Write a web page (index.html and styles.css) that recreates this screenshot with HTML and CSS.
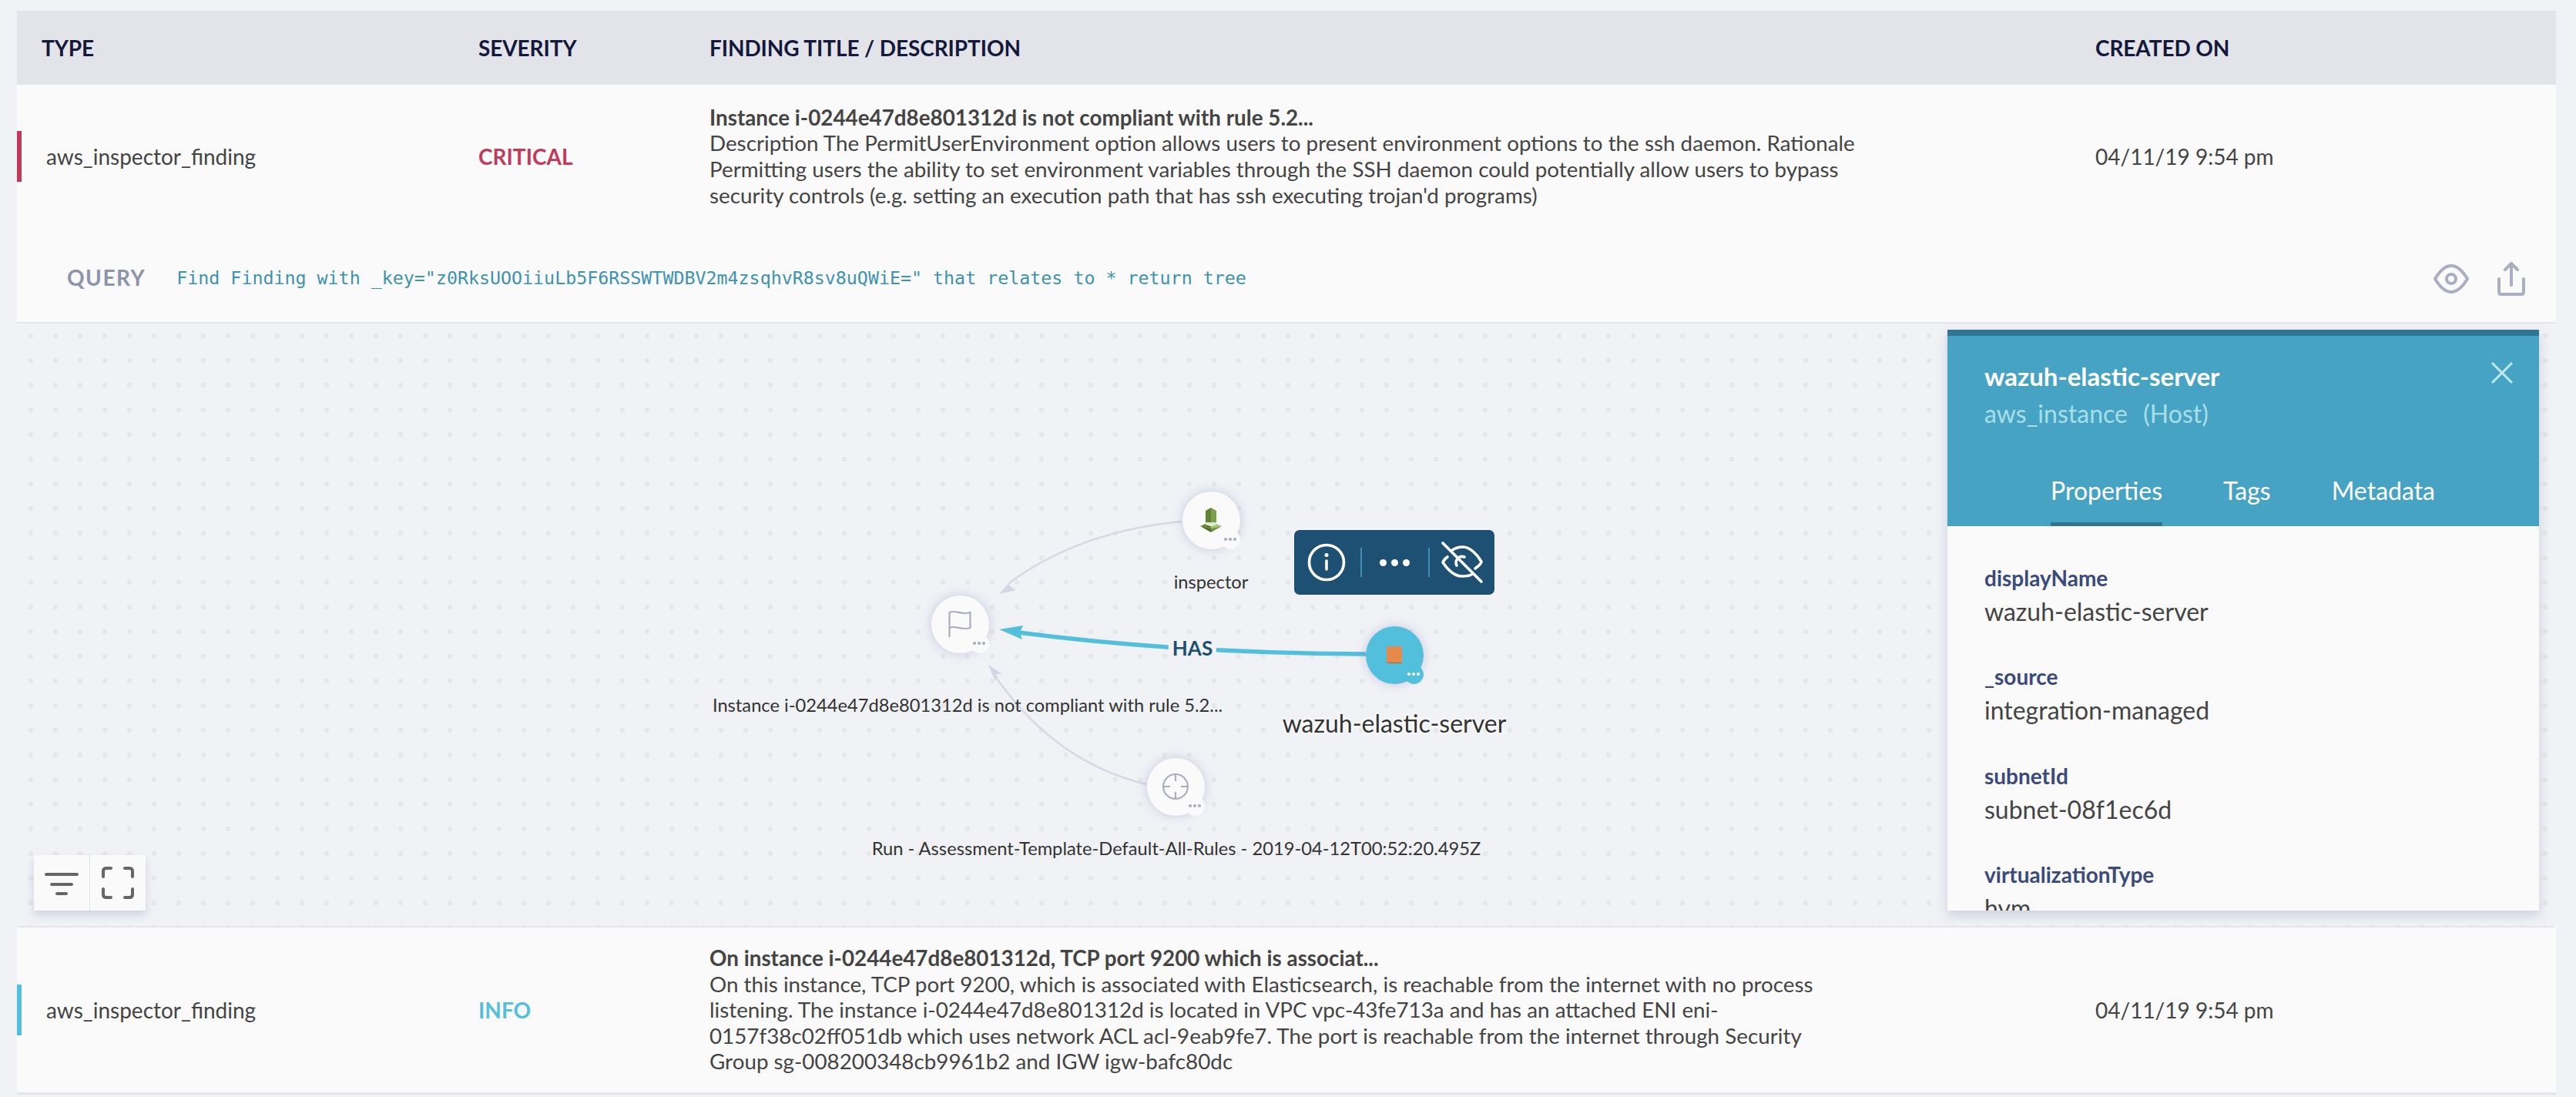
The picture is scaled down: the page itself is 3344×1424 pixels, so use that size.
FILE: index.html
```html
<!DOCTYPE html>
<html lang="en">
<head>
    <meta charset="UTF-8">
    <title>Findings</title>
    <link rel="stylesheet" href="styles.css">
</head>
<body>
    <div class="findings">
        <div class="grid-row head">
            <div class="cell cell-type">TYPE</div>
            <div class="cell">SEVERITY</div>
            <div class="cell">FINDING TITLE / DESCRIPTION</div>
            <div class="cell">CREATED ON</div>
        </div>

        <div class="grid-row finding finding-first">
            <div class="cell type-value"><span class="bar bar-critical"></span>aws_inspector_finding</div>
            <div class="cell critical">CRITICAL</div>
            <div class="cell desc">
                <strong>Instance i-0244e47d8e801312d is not compliant with rule 5.2...</strong>
                Description The PermitUserEnvironment option allows users to present environment options to the ssh daemon. Rationale Permitting users the ability to set environment variables through the SSH daemon could potentially allow users to bypass security controls (e.g. setting an execution path that has ssh executing trojan'd programs)
            </div>
            <div class="cell">04/11/19 9:54 pm</div>
        </div>

        <div class="query">
            <span class="query-label">QUERY</span>
            <code class="query-code">Find Finding with _key="z0RksUOOiiuLb5F6RSSWTWDBV2m4zsqhvR8sv8uQWiE=" that relates to * return tree</code>
            <div class="query-actions">
                <svg class="icon-eye" width="48" height="38" viewBox="0 0 48 38"><path d="M3 19C6 14 14 2 24 2s18 12 21 17c-3 5-11 17-21 17S6 24 3 19z"/><circle cx="24" cy="19" r="6"/></svg>
                <svg class="icon-share" width="36" height="44" viewBox="0 0 36 44"><path d="M2 22v17q0 3 3 3h26q3 0 3-3V22M18 30V3M10 10l8-8 8 8"/></svg>
            </div>
        </div>

        <!-- Graph canvas -->
        <div class="graph">
            <svg class="edges" width="3291" height="782" viewBox="24 420 3291 782">
                <path class="edge" d="M1534 677Q1400 690 1310 757"/>
                <polygon class="edge-head" points="1297,771 1312,754 1310,760 1319,766"/>
                <path class="edge" d="M1488 1018Q1370 990 1292 878"/>
                <polygon class="edge-head" points="1283,863 1301,875 1294,875 1292,884"/>
                <path class="edge-active" d="M1773 849Q1530 848 1322 821"/>
                <polygon class="edge-active-head" points="1297,817 1328,812 1324,821 1327,830"/>
            </svg>

            <div class="node node-inspector">
                <svg width="30" height="34" viewBox="0 0 30 34">
                    <polygon fill="#5f8233" points="8,5 15,1 15,20 8,20"/>
                    <polygon fill="#7b9f4b" points="15,1 22,5 22,20 15,20"/>
                    <polygon fill="#dfe8cf" points="8,20 22,20 22,23 8,23"/>
                    <polygon fill="#5f8233" points="8,23 15,25 15,28 1,25 8,22"/>
                    <polygon fill="#a5c46f" points="22,23 15,25 15,28 29,25 22,22"/>
                    <polygon fill="#4f6d2a" points="1,25 15,28 15,33"/>
                    <polygon fill="#6f9340" points="29,25 15,28 15,33"/>
                </svg>
                <span class="more"><i></i><i></i><i></i></span>
            </div>
            <div class="node node-flag">
                <svg class="line-icon" width="32" height="38" viewBox="0 0 32 38"><path d="M2.5 36V4C10 0 18 8 29.500 4V24C18 28 10 20 2.500 24"/></svg>
                <span class="more"><i></i><i></i><i></i></span>
            </div>
            <div class="node node-target">
                <svg class="line-icon" width="36" height="36" viewBox="0 0 36 36"><circle cx="18" cy="18" r="16"/><path d="M18 2V11M18 25V34M2 18H11M25 18H34"/></svg>
                <span class="more"><i></i><i></i><i></i></span>
            </div>
            <div class="node node-server">
                <span class="server-chip"></span>
                <span class="more"><i></i><i></i><i></i></span>
            </div>

            <div class="graph-label label-inspector">inspector</div>
            <div class="graph-label label-flag">Instance i-0244e47d8e801312d is not compliant with rule 5.2...</div>
            <div class="graph-label label-run">Run - Assessment-Template-Default-All-Rules - 2019-04-12T00:52:20.495Z</div>
            <div class="graph-label label-server">wazuh-elastic-server</div>
            <div class="edge-label">HAS</div>

            <div class="node-menu">
                <svg class="menu-icon menu-info" width="54" height="54" viewBox="0 0 54 54"><circle cx="27" cy="27" r="22.500"/><circle class="solid" cx="27" cy="17.500" r="2.500"/><path d="M27 25V36"/></svg>
                <span class="menu-sep"></span>
                <span class="menu-dots"><i></i><i></i><i></i></span>
                <span class="menu-sep"></span>
                <svg class="menu-icon menu-eye" width="60" height="60" viewBox="0 0 60 60"><path d="M16 15C20 12 25 10 31 10C40 10 49 19 55 29C55 31 51 35 47 38M42 46C38 48 34 48 30 48C20 48 11 39 5 30C6 27 8 25 11 23"/><path d="M23 34A8 8 0 0 1 33 23"/><path d="M5 5L55 55"/></svg>
            </div>

            <aside class="panel">
                <div class="panel-head">
                    <svg class="panel-close" width="30" height="30" viewBox="0 0 30 30"><path d="M2 2L28 28M28 2L2 28"/></svg>
                    <div class="panel-title">wazuh-elastic-server</div>
                    <div class="panel-sub">aws_instance&nbsp; (Host)</div>
                    <div class="tabs">
                        <span class="tab tab-active">Properties</span>
                        <span class="tab">Tags</span>
                        <span class="tab">Metadata</span>
                    </div>
                </div>
                <div class="props">
                    <div class="prop"><div class="prop-key">displayName</div><div class="prop-val">wazuh-elastic-server</div></div>
                    <div class="prop"><div class="prop-key">_source</div><div class="prop-val">integration-managed</div></div>
                    <div class="prop"><div class="prop-key">subnetId</div><div class="prop-val">subnet-08f1ec6d</div></div>
                    <div class="prop"><div class="prop-key">virtualizationType</div><div class="prop-val">hvm</div></div>
                </div>
            </aside>

            <div class="graph-controls">
                <div class="control">
                    <svg width="44" height="32" viewBox="0 0 44 32"><path d="M2 5H42M9 18H35M16 30H28"/></svg>
                </div>
                <div class="control">
                    <svg width="42" height="42" viewBox="0 0 42 42"><path d="M2 13V6Q2 2 6 2H12M30 2H36Q40 2 40 6V13M2 29V36Q2 40 6 40H12M30 40H36Q40 40 40 36V29"/></svg>
                </div>
            </div>
        </div>

        <div class="grid-row finding finding-second">
            <div class="cell type-value"><span class="bar bar-info"></span>aws_inspector_finding</div>
            <div class="cell info">INFO</div>
            <div class="cell desc">
                <strong>On instance i-0244e47d8e801312d, TCP port 9200 which is associat...</strong>
                On this instance, TCP port 9200, which is associated with Elasticsearch, is reachable from the internet with no process listening. The instance i-0244e47d8e801312d is located in VPC vpc-43fe713a and has an attached ENI eni-0157f38c02ff051db which uses network ACL acl-9eab9fe7. The port is reachable from the internet through Security Group sg-008200348cb9961b2 and IGW igw-bafc80dc
            </div>
            <div class="cell">04/11/19 9:54 pm</div>
        </div>
    </div>
</body>
</html>
```

FILE: styles.css
```css
body {
    margin: 0;
    background: #f0f2f6;
    font-family: Lato, "Open Sans", sans-serif;
    color: #444;
    font-size: 28px;
    overflow: hidden;
}

.findings {
    margin: 14px 26px 0 22px;
    height: 1410px;
}

.grid-row {
    display: grid;
    grid-template-columns: 599px 300px 1799px 1fr;
    align-items: center;
    background: #fafafa;
}

.head {
    height: 96px;
    background: #e2e4ea;
    color: #14183a;
    font-size: 28px;
    font-weight: 700;
    letter-spacing: -0.1px;
}

.head .cell-type {
    padding-left: 32px;
}

.finding-first {
    height: 186px;
}

.finding-second {
    height: 214px;
    border-bottom: 3px solid #e4e6ec;
}

.type-value {
    display: flex;
    align-items: center;
}

.bar {
    width: 6px;
    height: 66px;
    margin-right: 32px;
}

.bar-critical {
    background: #c23a5a;
}

.bar-info {
    background: #52bfdd;
}

.critical {
    color: #c23a5a;
    font-weight: 700;
}

.info {
    color: #52bfdd;
    font-weight: 700;
}

.desc {
    width: 1494px;
    font-size: 27.8px;
    line-height: 33.6px;
}

.desc strong {
    display: block;
}

/* Query bar */
.query {
    display: flex;
    align-items: center;
    height: 124px;
    padding: 6px 40px 0 65px;
    box-sizing: border-box;
    background: #fafafa;
    border-bottom: 2px solid #e4e6ec;
}

.query-label {
    color: #8c93ab;
    font-weight: 700;
    font-size: 28px;
    letter-spacing: 1.5px;
    margin-right: 40px;
}

.query-code {
    color: #3e93ad;
    font-family: "DejaVu Sans Mono", monospace;
    font-size: 23.3px;
}

.query-actions {
    display: flex;
    align-items: center;
    gap: 36px;
    margin: 3px 0 0 auto;
}

.icon-eye, .icon-share {
    fill: none;
    stroke: #a9aec2;
    stroke-width: 4;
    stroke-linecap: round;
    stroke-linejoin: round;
}

/* Graph */
.graph {
    position: relative;
    box-sizing: border-box;
    height: 784px;
    margin: 0 3px 0 2px;
    overflow: hidden;
    border-bottom: 2px solid #e4e6ec;
    background-color: #f0f2f6;
    background-image: radial-gradient(circle at center, #e6e8e9 3.2px, transparent 3.8px);
    background-size: 32px 32px;
}

.edges {
    position: absolute;
    left: 0;
    top: 0;
}

.edge {
    fill: none;
    stroke: #d6d9e6;
    stroke-width: 2.5;
}

.edge-head {
    fill: #d3d6e4;
}

.edge-active {
    fill: none;
    stroke: #52bfdd;
    stroke-width: 5.5;
}

.edge-active-head {
    fill: #52bfdd;
}

.node {
    position: absolute;
    display: flex;
    align-items: center;
    justify-content: center;
    width: 75px;
    height: 75px;
    border-radius: 50%;
    background: #fafafa;
    box-shadow: 0 0 14px rgba(90, 100, 160, 0.28);
}

.node-inspector {
    left: 1510.5px;
    top: 217.5px;
}

.node-flag {
    left: 1184.5px;
    top: 352.5px;
}

.node-target {
    left: 1464.5px;
    top: 563.5px;
}

.node-server {
    left: 1748.5px;
    top: 392.5px;
    background: #52bfdd;
}

.line-icon {
    fill: none;
    stroke: #a9aec2;
    stroke-width: 2.2;
}

.more {
    position: absolute;
    right: 0;
    bottom: 0;
    display: flex;
    align-items: center;
    justify-content: center;
    gap: 2.5px;
    width: 25px;
    height: 25px;
    border-radius: 50%;
    background: #fafafa;
}

.more i {
    width: 3.5px;
    height: 3.5px;
    border-radius: 50%;
    background: #a9aec2;
}

.node-server .more {
    background: #52bfdd;
}

.node-server .more i {
    background: #fff;
}

.server-chip {
    width: 20px;
    height: 21px;
    border-radius: 2px;
    background: #e58a4a;
    border-bottom: 1px solid #9c6a3c;
}

.graph-label {
    position: absolute;
    transform: translateX(-50%);
    white-space: nowrap;
    color: #333;
    font-size: 23.7px;
    line-height: 30px;
}

.label-inspector {
    left: 1548px;
    top: 320px;
}

.label-flag {
    left: 1232px;
    top: 480px;
}

.label-run {
    left: 1503px;
    top: 666px;
}

.label-server {
    left: 1786px;
    top: 499px;
    font-size: 32px;
    line-height: 40px;
    text-shadow: 0 0 4px #fff, 0 0 4px #fff, 0 0 4px #fff;
}

.edge-label {
    position: absolute;
    left: 1524px;
    top: 421px;
    transform: translate(-50%, -50%);
    padding: 0 5px;
    background: #f0f2f6;
    color: #1e5073;
    font-size: 26px;
    font-weight: 700;
    line-height: 30px;
}

.node-menu {
    position: absolute;
    left: 1656px;
    top: 268px;
    display: flex;
    align-items: center;
    box-sizing: border-box;
    width: 260px;
    height: 84px;
    padding-left: 15px;
    border-radius: 7px;
    background: #1e5073;
}

.menu-icon {
    flex: none;
    fill: none;
    stroke: #fff;
    stroke-width: 3.6;
    stroke-linecap: round;
    stroke-linejoin: round;
}

.menu-icon .solid {
    fill: #fff;
    stroke: none;
}

.menu-info {
    margin-right: 17px;
}

.menu-eye {
    margin-left: 12px;
}

.menu-sep {
    width: 2px;
    height: 38px;
    background: #3f91b4;
}

.menu-dots {
    display: flex;
    gap: 6px;
    margin: 0 24.5px 0 22.5px;
}

.menu-dots i {
    width: 9px;
    height: 9px;
    border-radius: 50%;
    background: #fff;
}

/* Entity panel */
.panel {
    position: absolute;
    top: 8px;
    right: 19px;
    width: 768px;
    height: 754px;
    overflow: hidden;
    background: #fafafa;
    box-shadow: 0 6px 14px rgba(60, 70, 110, 0.2);
}

.panel-head {
    position: relative;
    box-sizing: border-box;
    height: 255px;
    padding: 27px 48px 0;
    border-top: 8px solid #307594;
    background: #47a3c4;
}

.panel-close {
    position: absolute;
    top: 33px;
    right: 33px;
    fill: none;
    stroke: #bfeaf2;
    stroke-width: 3;
}

.panel-title {
    color: #fff;
    font-size: 33px;
    font-weight: 700;
    line-height: 50px;
}

.panel-sub {
    color: #a7dfe9;
    font-size: 32px;
    line-height: 48px;
    word-spacing: 2px;
}

.tabs {
    display: flex;
    gap: 79px;
    margin: 49px 0 0 86px;
}

.tab {
    height: 73px;
    box-sizing: border-box;
    color: #fff;
    font-size: 32px;
    line-height: 54px;
}

.tab-active {
    border-bottom: 5px solid #307594;
}

.props {
    padding: 48px 48px 0;
}

.prop {
    height: 128.300px;
}

.prop-key {
    color: #3a4a7a;
    font-size: 28px;
    font-weight: 700;
    line-height: 38px;
}

.prop-val {
    color: #444;
    font-size: 32px;
    line-height: 50px;
}

.graph-controls {
    position: absolute;
    left: 20px;
    bottom: 20px;
    display: flex;
    height: 72px;
    background: #fafafa;
    box-shadow: 0 6px 10px rgba(60, 70, 110, 0.18);
}

.control {
    display: flex;
    align-items: center;
    justify-content: center;
    width: 72px;
}

.control + .control {
    border-left: 1px solid #e2e4ea;
}

.control svg {
    fill: none;
    stroke: #666;
    stroke-width: 4;
    stroke-linecap: round;
}
```
